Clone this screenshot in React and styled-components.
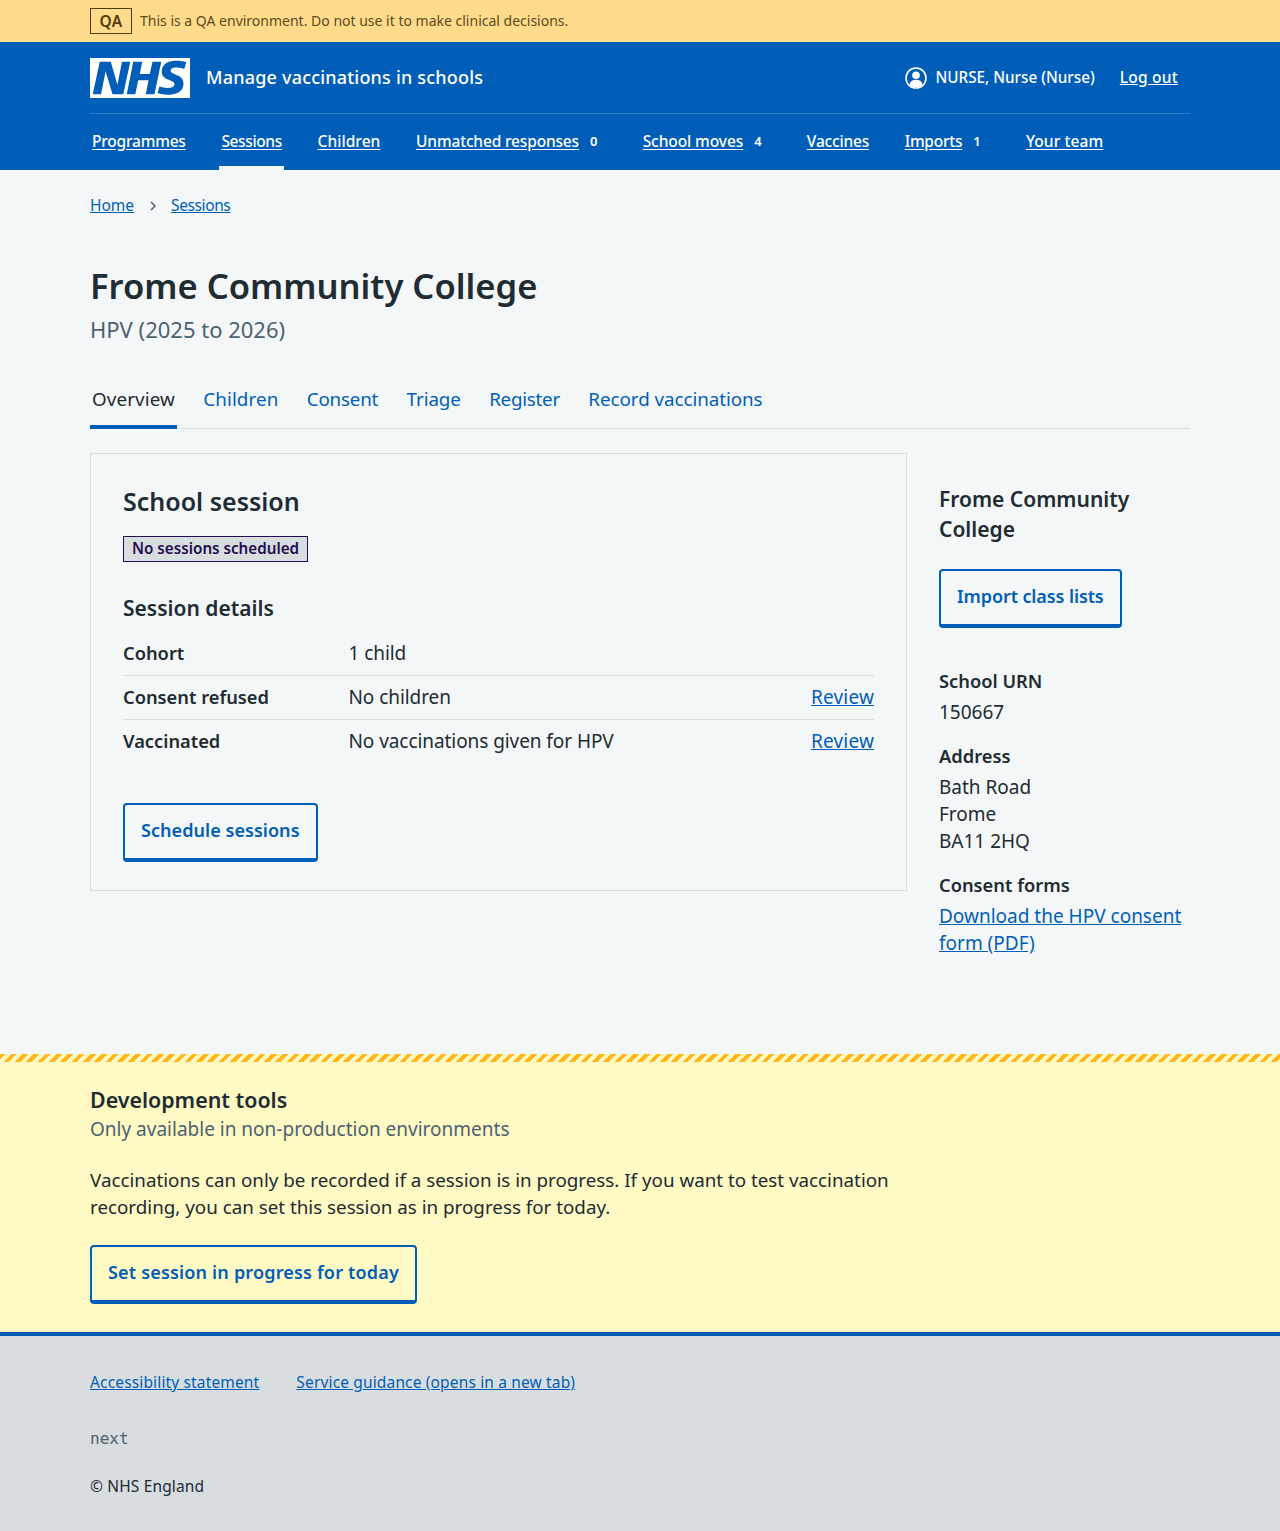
import styled, { createGlobalStyle } from "styled-components"

const Global = createGlobalStyle`
  * { box-sizing: border-box; }
  body {
    margin: 0;
    background: #f4f7f8;
    color: #212b32;
    font-family: "Noto Sans", "Open Sans", sans-serif;
    font-size: 19px;
    line-height: 27px;
  }
  a { color: #005eb8; }
`

const Wrap = styled.div`
  width: 1100px;
  margin: 0 auto;
`

const Banner = styled.div`
  height: 42px;
  background: #ffdb8c;
  color: #5c4a1c;
  font-size: 14px;
  line-height: 20px;
`
const BannerRow = styled(Wrap)`
  display: flex;
  align-items: center;
  gap: 8px;
  padding-top: 8px;
`
const Tag = styled.span`
  width: 42px;
  height: 26px;
  border: 1px solid #4d3a0d;
  color: #4d3a0d;
  font-weight: 600;
  font-size: 15.5px;
  letter-spacing: 0.3px;
  line-height: 24px;
  text-align: center;
`

const Header = styled.header`
  height: 128px;
  background: #005eb8;
  color: #fff;
  a { color: #fff; }
`
const TopRow = styled.div`
  display: flex;
  align-items: center;
  height: 72px;
  border-bottom: 1px solid #2b7cc9;
`
const Logo = styled.svg`
  width: 100px;
  height: 40px;
  margin-right: 16px;
  display: block;
`
const ServiceName = styled.span`
  font-size: 18px;
  font-weight: 500;
  letter-spacing: 0.2px;
  flex: 1;
`
const Account = styled.span`
  display: flex;
  align-items: center;
  gap: 8px;
  font-size: 15.25px;
  font-weight: 500;
  margin-right: 25px;
`
const LogOut = styled.a`
  font-size: 15.5px;
  font-weight: 500;
  letter-spacing: 0.25px;
  margin-right: 12px;
`
const Nav = styled.nav`
  display: flex;
  gap: 31.7px;
  height: 56px;
`
const NavItem = styled.a`
  display: flex;
  align-items: flex-start;
  height: 56px;
  padding: 14px 2px 0;
  font-size: 15.5px;
  font-weight: 500;
  letter-spacing: ${p => p.$track}px;
  text-decoration: none;
  border-bottom: 4px solid ${p => (p.$active ? "#f4f7f8" : "transparent")};
  u { text-underline-offset: 2px; }
`
const Count = styled.span`
  display: inline-block;
  width: 28px;
  padding-left: 11px;
  font-size: 13px;
  font-weight: 600;
  letter-spacing: 0;
`

const Main = styled(Wrap)`
  height: 884px;
`
const Crumbs = styled.div`
  display: flex;
  align-items: flex-start;
  padding-top: 22px;
  height: 69px;
  font-size: 15.5px;
  line-height: 27px;
`
const Chevron = styled.svg`
  width: 8px;
  height: 10px;
  margin: 9px 14px 0 15px;
`
const Crumb = styled.a`
  letter-spacing: ${p => p.$track || 0}px;
`
const Title = styled.h1`
  margin: 0;
  padding-top: 23px;
  font-size: 34.6px;
  line-height: 48px;
  font-weight: 600;
`
const Caption = styled.div`
  margin-top: 4px;
  color: #4c6272;
  font-size: 22px;
  line-height: 30px;
`
const Tabs = styled.div`
  display: flex;
  gap: 24.4px;
  height: 58px;
  margin-top: 27px;
  border-bottom: 1px solid #d8dde0;
`
const Tab = styled.a`
  padding: 15px 2px 0;
  height: 58px;
  font-size: 18.8px;
  text-decoration: none;
  letter-spacing: ${p => p.$track}px;
  color: ${p => (p.$active ? "#212b32" : "#005eb8")};
  border-bottom: 4px solid ${p => (p.$active ? "#005eb8" : "transparent")};
`
const Columns = styled.div`
  display: flex;
  gap: 32px;
  margin-top: 24px;
`
const Card = styled.section`
  width: 817px;
  height: 438px;
  padding: 31px 32px 32px;
  border: 1px solid #d8dde0;
`
const CardTitle = styled.h2`
  margin: 0 0 17px;
  font-size: 25px;
  line-height: 32px;
  font-weight: 600;
`
const Status = styled.strong`
  display: inline-block;
  height: 26px;
  padding: 0 8px;
  background: #d8dde0;
  border: 1px solid #240e4f;
  color: #240e4f;
  font-size: 15.2px;
  font-weight: 600;
  line-height: 23px;
`
const SubTitle = styled.h3`
  margin: 30px 0 8px;
  font-size: 21px;
  line-height: 32px;
  font-weight: 600;
`
const Row = styled.div`
  display: grid;
  grid-template-columns: 225.5px 1fr auto;
  height: 44px;
  padding-top: 8px;
  border-bottom: ${p => (p.$last ? "none" : "1px solid #d8dde0")};
`
const Key = styled.span`
  font-size: 18.3px;
  line-height: 25px;
  font-weight: 600;
`
const Value = styled.span`
  letter-spacing: -0.07px;
`
const ReviewLink = styled.a`
  letter-spacing: 0.15px;
`
const Button = styled.a`
  display: inline-block;
  height: 59px;
  padding: 12px 16px 0;
  background: transparent;
  border: 2px solid #005eb8;
  border-bottom-width: 4px;
  border-radius: 4px;
  color: #005eb8;
  font-weight: 600;
  font-size: 18px;
  line-height: 27px;
  letter-spacing: ${p => p.$track || 0}px;
  text-decoration: none;
`
const CardButton = styled(Button)`
  margin-top: 39px;
`
const Side = styled.aside`
  width: 251px;
  padding-top: 31px;
`
const SideTitle = styled.h2`
  margin: 0 0 25px;
  font-size: 21px;
  line-height: 30px;
  font-weight: 600;
`
const SideLabel = styled.div`
  font-size: 18.3px;
  line-height: 25px;
  font-weight: 600;
  margin-top: ${p => p.$top}px;
  margin-bottom: 6px;
`

const Dev = styled.section`
  position: relative;
  height: 278px;
  padding-top: 8px;
  background: #fff9c4;
`
const Stripes = styled.div`
  position: absolute;
  left: 0;
  right: 0;
  top: 0;
  height: 8px;
  background: repeating-linear-gradient(135deg, #ffb81c 0, #ffb81c 4px, #fff9c4 4px, #fff9c4 8px);
`
const DevTitle = styled.h2`
  margin: 0;
  padding-top: 24px;
  font-size: 21.4px;
  line-height: 27px;
  font-weight: 600;
`
const DevSub = styled.div`
  color: #4c6272;
  line-height: 27px;
  margin-top: 3px;
`
const DevText = styled.p`
  margin: 24px 0 24px;
  width: 816px;
  font-size: 18.8px;
`

const Footer = styled.footer`
  height: 199px;
  padding-top: 33px;
  background: #d8dde0;
  border-top: 4px solid #005eb8;
  font-size: 15.5px;
  letter-spacing: 0.15px;
`
const FootLinks = styled.div`
  display: flex;
  gap: 37px;
`
const Version = styled.div`
  margin-top: 29px;
  color: #4c6272;
  font-family: "DejaVu Sans Mono", monospace;
  font-size: 16px;
  letter-spacing: 0;
`
const Copy = styled.div`
  margin-top: 21px;
`

const navItems = [
  { name: "Programmes", track: -0.2 },
  { name: "Sessions", track: -0.37, active: true },
  { name: "Children", track: 0.06 },
  { name: "Unmatched responses", count: 0, track: -0.16 },
  { name: "School moves", count: 4, track: -0.08 },
  { name: "Vaccines", track: -0.19 },
  { name: "Imports", count: 1, track: -0.25 },
  { name: "Your team", track: 0.11 },
]

const tabs = [
  { name: "Overview", track: 0.12, active: true },
  { name: "Children", track: 0.1 },
  { name: "Consent", track: -0.2 },
  { name: "Triage", track: -0.1 },
  { name: "Register", track: -0.25 },
  { name: "Record vaccinations", track: -0.05 },
]

export default function App() {
  return (
    <>
      <Global />
      <Banner>
        <BannerRow>
          <Tag>QA</Tag>
          <span>This is a QA environment. Do not use it to make clinical decisions.</span>
        </BannerRow>
      </Banner>
      <Header>
        <Wrap>
          <TopRow>
            <Logo viewBox="0 0 40 16" aria-label="NHS">
              <path fill="#fff" d="M0 0h40v16H0z" />
              <path
                fill="#005eb8"
                d="M3.9 1.5h4.4l2.6 9h.1l1.8-9h3.3l-2.8 13H9l-2.7-9h-.1l-1.8 9H1.1M17.3 1.5h3.6l-1 4.9h4L25 1.5h3.5l-2.7 13h-3.5l1.1-5.6h-4.1l-1.2 5.6h-3.4M37.7 4.4c-.7-.3-1.6-.6-2.9-.6-1.4 0-2.5.2-2.5 1.3 0 1.8 5.1 1.2 5.1 5.1 0 3.6-3.3 4.5-6.4 4.5-1.3 0-2.9-.3-4-.7l.8-2.7c.7.4 2.1.7 3.2.7s2.8-.2 2.8-1.5c0-2.1-5.1-1.3-5.1-5 0-3.4 2.9-4.4 5.8-4.4 1.6 0 3.1.2 4 .6"
              />
            </Logo>
            <ServiceName>Manage vaccinations in schools</ServiceName>
            <Account>
              <svg width="22" height="22" viewBox="0 0 22 22">
                <circle cx="11" cy="11" r="10" fill="none" stroke="#fff" strokeWidth="1.6" />
                <circle cx="11" cy="8.2" r="3.8" fill="#fff" />
                <path fill="#fff" d="M4.6 17.4c.6-3.2 3.2-4.6 6.4-4.6s5.8 1.4 6.4 4.6c-1.6 1.8-3.9 3-6.4 3s-4.8-1.2-6.4-3z" />
              </svg>
              NURSE, Nurse (Nurse)
            </Account>
            <LogOut href="#">Log out</LogOut>
          </TopRow>
          <Nav>
            {navItems.map(({ name, track, active, count }) => (
              <NavItem key={name} href="#" $track={track} $active={active}>
                <u>{name}</u>
                {count !== undefined && <Count>{count}</Count>}
              </NavItem>
            ))}
          </Nav>
        </Wrap>
      </Header>
      <Main>
        <Crumbs>
          <Crumb href="#">Home</Crumb>
          <Chevron viewBox="0 0 8 10">
            <path d="M2 1l4 4-4 4" fill="none" stroke="#4c6272" strokeWidth="1.5" />
          </Chevron>
          <Crumb href="#" $track={-0.4}>Sessions</Crumb>
        </Crumbs>
        <Title>Frome Community College</Title>
        <Caption>HPV (2025 to 2026)</Caption>
        <Tabs>
          {tabs.map(({ name, track, active }) => (
            <Tab key={name} href="#" $track={track} $active={active}>
              {name}
            </Tab>
          ))}
        </Tabs>
        <Columns>
          <Card>
            <CardTitle>School session</CardTitle>
            <Status>No sessions scheduled</Status>
            <SubTitle>Session details</SubTitle>
            <Row>
              <Key>Cohort</Key>
              <Value>1 child</Value>
            </Row>
            <Row>
              <Key>Consent refused</Key>
              <Value>No children</Value>
              <ReviewLink href="#">Review</ReviewLink>
            </Row>
            <Row $last>
              <Key>Vaccinated</Key>
              <Value>No vaccinations given for HPV</Value>
              <ReviewLink href="#">Review</ReviewLink>
            </Row>
            <CardButton href="#" $track={0.05}>Schedule sessions</CardButton>
          </Card>
          <Side>
            <SideTitle>Frome Community College</SideTitle>
            <Button href="#" $track={-0.1}>Import class lists</Button>
            <SideLabel $top={40}>School URN</SideLabel>
            <div>150667</div>
            <SideLabel $top={17}>Address</SideLabel>
            <div>
              Bath Road
              <br />
              Frome
              <br />
              BA11 2HQ
            </div>
            <SideLabel $top={17}>Consent forms</SideLabel>
            <a href="#">Download the HPV consent form (PDF)</a>
          </Side>
        </Columns>
      </Main>
      <Dev>
        <Stripes />
        <Wrap>
          <DevTitle>Development tools</DevTitle>
          <DevSub>Only available in non-production environments</DevSub>
          <DevText>
            Vaccinations can only be recorded if a session is in progress. If you want to test vaccination recording,
            you can set this session as in progress for today.
          </DevText>
          <Button href="#" $track={0.18}>Set session in progress for today</Button>
        </Wrap>
      </Dev>
      <Footer>
        <Wrap>
          <FootLinks>
            <a href="#">Accessibility statement</a>
            <a href="#">Service guidance (opens in a new tab)</a>
          </FootLinks>
          <Version>next</Version>
          <Copy>© NHS England</Copy>
        </Wrap>
      </Footer>
    </>
  )
}
